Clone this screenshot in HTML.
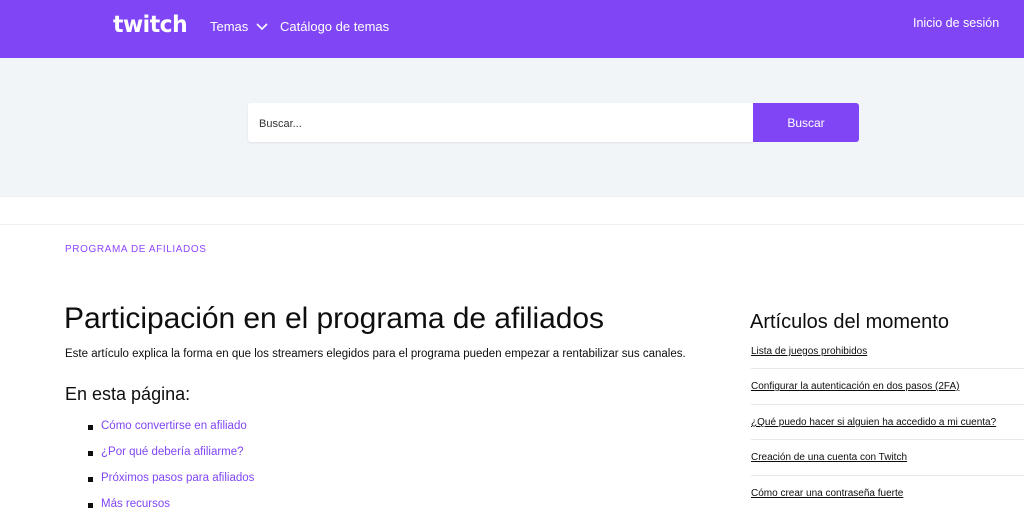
<!DOCTYPE html>
<html><head><meta charset="utf-8"><style>
*{margin:0;padding:0;box-sizing:border-box}
body{width:1024px;height:519px;overflow:hidden;font-family:"Liberation Sans",sans-serif;background:#fff;color:#0e0e10;position:relative}
.hdr{position:absolute;left:0;top:0;width:1024px;height:58px;background:#8046f5}
.logo{position:absolute;left:113px;top:12px;font:900 23px "DejaVu Sans",sans-serif;color:#fff;letter-spacing:-0.5px;transform:scaleX(0.95);transform-origin:left}
.nav{position:absolute;top:19px;color:#fff;font-size:13px}
.hero{position:absolute;top:58px;left:0;width:1024px;height:138px;background:#f2f5f8}
.search{position:absolute;left:248px;top:103px;width:505px;height:39px;background:#fff;border-radius:3px 0 0 3px;font-size:11px;color:#333;padding:15px 11px;box-shadow:0 1px 2px rgba(0,0,0,.08)}
.btn{position:absolute;left:753px;top:103px;width:106px;height:39px;background:#8046f5;color:#fff;font-size:12px;text-align:center;line-height:41px;border-radius:0 3px 3px 0}
.line{position:absolute;left:0;width:1024px;height:1px;background:#eef0f2}
.a{position:absolute;white-space:nowrap}
.li{position:absolute;left:101px;font-size:11.5px;color:#8046f5}
.li:before{content:"";position:absolute;left:-13px;top:5px;width:5px;height:5px;background:#0e0e10}
.s{position:absolute;left:751px;font-size:10px;text-decoration:underline;color:#0e0e10}
.sl{position:absolute;left:751px;width:273px;height:1px;background:#e8e8e8}
</style></head><body>
<div class="hdr"></div>
<div class="logo">twitch</div>
<div class="nav" style="left:210px">Temas <svg width="12" height="8" style="margin-left:4px"><path d="M1 1l5 5 5-5" stroke="#fff" stroke-width="1.6" fill="none"/></svg></div>
<div class="nav" style="left:280px">Catálogo de temas</div>
<div class="nav" style="left:913px;top:16px;font-size:12.5px">Inicio de sesión</div>
<div class="hero"></div>
<div class="search">Buscar...</div>
<div class="btn">Buscar</div>
<div class="line" style="top:196px"></div>
<div class="line" style="top:224px"></div>
<div class="a" style="left:65px;top:244px;font-size:10px;color:#9147ff;letter-spacing:.6px">PROGRAMA DE AFILIADOS</div>
<div class="a" style="left:64px;top:302px;font-size:30px;letter-spacing:-0.05px">Participación en el programa de afiliados</div>
<div class="a" style="left:65px;top:348px;font-size:11.5px">Este artículo explica la forma en que los streamers elegidos para el programa pueden empezar a rentabilizar sus canales.</div>
<div class="a" style="left:65px;top:384px;font-size:18px">En esta página:</div>
<div class="li a" style="top:420px">Cómo convertirse en afiliado</div>
<div class="li a" style="top:446px">¿Por qué debería afiliarme?</div>
<div class="li a" style="top:472px">Próximos pasos para afiliados</div>
<div class="li a" style="top:498px">Más recursos</div>
<div class="a" style="left:750px;top:311px;font-size:20px">Artículos del momento</div>
<div class="s a" style="top:346px">Lista de juegos prohibidos</div>
<div class="sl" style="top:368px"></div>
<div class="s a" style="top:381px">Configurar la autenticación en dos pasos (2FA)</div>
<div class="sl" style="top:404px"></div>
<div class="s a" style="top:417px">¿Qué puedo hacer si alguien ha accedido a mi cuenta?</div>
<div class="sl" style="top:439px"></div>
<div class="s a" style="top:452px">Creación de una cuenta con Twitch</div>
<div class="sl" style="top:475px"></div>
<div class="s a" style="top:488px">Cómo crear una contraseña fuerte</div>
</body></html>
